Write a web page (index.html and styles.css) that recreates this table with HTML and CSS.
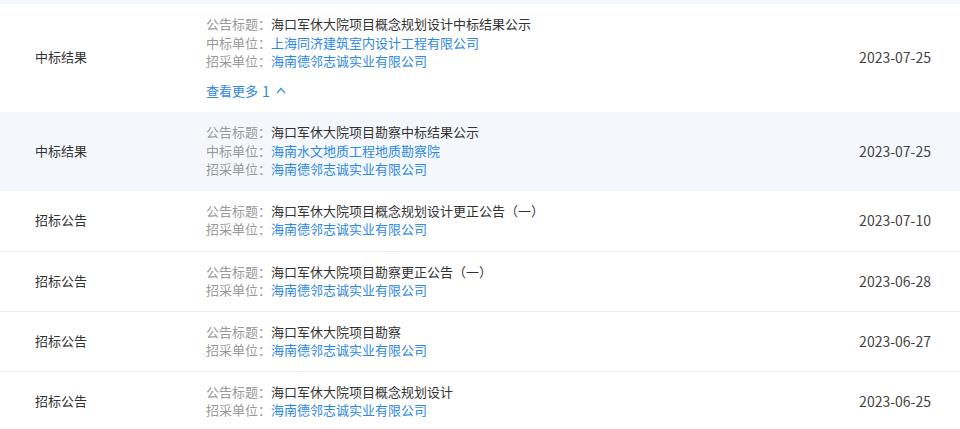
FILE: index.html
```html
<!DOCTYPE html>
<html lang="zh-CN">
<head>
  <meta charset="UTF-8">
  <title>招投标</title>
  <link rel="stylesheet" href="styles.css">
</head>
<body>

  <div class="list">
    <div class="row">
      <div class="type">中标结果</div>
      <div class="info">
        <div><span class="key">公告标题：</span>海口军休大院项目概念规划设计中标结果公示</div>
        <div><span class="key">中标单位：</span><a href="#">上海同济建筑室内设计工程有限公司</a></div>
        <div><span class="key">招采单位：</span><a href="#">海南德邻志诚实业有限公司</a></div>
        <a class="more" href="#">查看更多 <span class="num">1</span>
          <svg width="10" height="7" viewBox="0 0 10 7"><path d="M1 6 L5 1.5 L9 6" fill="none" stroke="#3a8ee6" stroke-width="1.2"/></svg>
        </a>
      </div>
      <div class="date">2023-07-25</div>
    </div>

    <div class="row sub">
      <div class="type">中标结果</div>
      <div class="info">
        <div><span class="key">公告标题：</span>海口军休大院项目勘察中标结果公示</div>
        <div><span class="key">中标单位：</span><a href="#">海南水文地质工程地质勘察院</a></div>
        <div><span class="key">招采单位：</span><a href="#">海南德邻志诚实业有限公司</a></div>
      </div>
      <div class="date">2023-07-25</div>
    </div>

    <div class="row">
      <div class="type">招标公告</div>
      <div class="info">
        <div><span class="key">公告标题：</span>海口军休大院项目概念规划设计更正公告（一）</div>
        <div><span class="key">招采单位：</span><a href="#">海南德邻志诚实业有限公司</a></div>
      </div>
      <div class="date">2023-07-10</div>
    </div>

    <div class="row line">
      <div class="type">招标公告</div>
      <div class="info">
        <div><span class="key">公告标题：</span>海口军休大院项目勘察更正公告（一）</div>
        <div><span class="key">招采单位：</span><a href="#">海南德邻志诚实业有限公司</a></div>
      </div>
      <div class="date">2023-06-28</div>
    </div>

    <div class="row line">
      <div class="type">招标公告</div>
      <div class="info">
        <div><span class="key">公告标题：</span>海口军休大院项目勘察</div>
        <div><span class="key">招采单位：</span><a href="#">海南德邻志诚实业有限公司</a></div>
      </div>
      <div class="date">2023-06-27</div>
    </div>

    <div class="row line">
      <div class="type">招标公告</div>
      <div class="info">
        <div><span class="key">公告标题：</span>海口军休大院项目概念规划设计</div>
        <div><span class="key">招采单位：</span><a href="#">海南德邻志诚实业有限公司</a></div>
      </div>
      <div class="date">2023-06-25</div>
    </div>
  </div>

</body>
</html>
```

FILE: styles.css
```css
body {
  margin: 0;
  font-family: "Microsoft YaHei", "Noto Sans CJK SC", sans-serif;
  font-size: 13px;
  color: #333;
  background: #fff;
}

.list {
  border-top: 4px solid #f4f8fd;
}

.row {
  display: flex;
  align-items: center;
  padding: 11px 0 12px;
  line-height: 18.5px;
}

.row.sub {
  background: #f4f8fd;
}

.row.line {
  border-top: 1px solid #ebebeb;
  padding-bottom: 11px;
}

.type {
  width: 171px;
  padding-left: 35px;
}

.info {
  flex: 1;
}

.key {
  color: #999;
}

a {
  color: #2f88e0;
  text-decoration: none;
}

.more {
  display: inline-flex;
  align-items: center;
  gap: 6px;
  margin-top: 11px;
}

.more .num {
  font-size: 14px;
  margin-left: -2px;
}

.date {
  padding-right: 29px;
  font-size: 14px;
  color: #444;
}
```
